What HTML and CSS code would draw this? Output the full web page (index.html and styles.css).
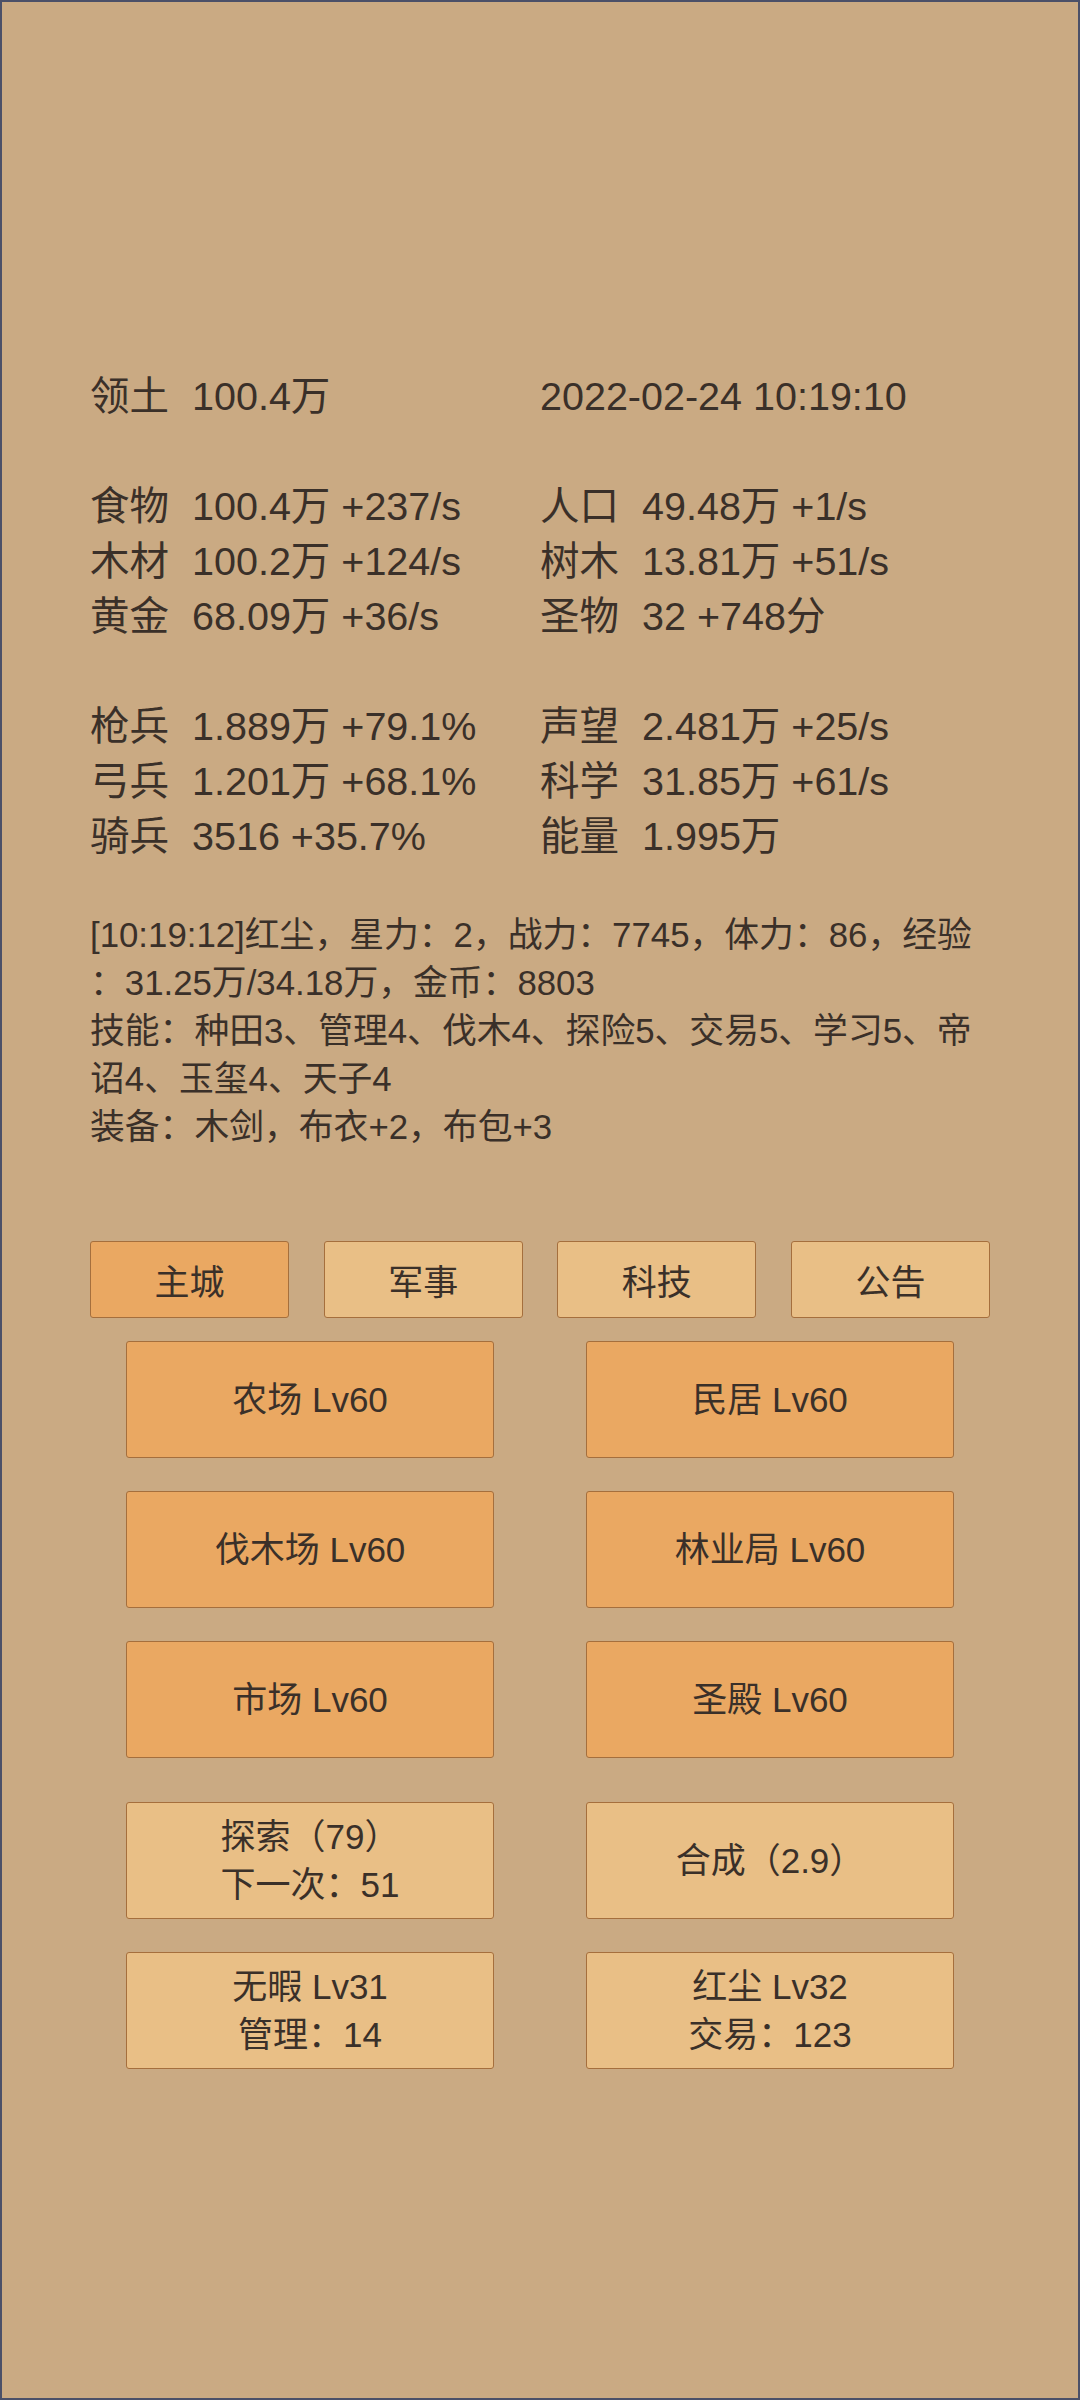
FILE: index.html
```html
<!DOCTYPE html>
<html lang="zh-CN">
<head>
<meta charset="utf-8">
<title>主城</title>
<link rel="stylesheet" href="styles.css">
</head>
<body>
<div class="screen">
  <div class="stats">
    <div class="stat"><span class="k">领土</span><span class="v">100.4万</span></div>
    <div class="stat"><span class="v">2022-02-24 10:19:10</span></div>
    <div class="blank"></div>
    <div class="stat"><span class="k">食物</span><span class="v">100.4万 +237/s</span></div>
    <div class="stat"><span class="k">人口</span><span class="v">49.48万 +1/s</span></div>
    <div class="stat"><span class="k">木材</span><span class="v">100.2万 +124/s</span></div>
    <div class="stat"><span class="k">树木</span><span class="v">13.81万 +51/s</span></div>
    <div class="stat"><span class="k">黄金</span><span class="v">68.09万 +36/s</span></div>
    <div class="stat"><span class="k">圣物</span><span class="v">32 +748分</span></div>
    <div class="blank"></div>
    <div class="stat"><span class="k">枪兵</span><span class="v">1.889万 +79.1%</span></div>
    <div class="stat"><span class="k">声望</span><span class="v">2.481万 +25/s</span></div>
    <div class="stat"><span class="k">弓兵</span><span class="v">1.201万 +68.1%</span></div>
    <div class="stat"><span class="k">科学</span><span class="v">31.85万 +61/s</span></div>
    <div class="stat"><span class="k">骑兵</span><span class="v">3516 +35.7%</span></div>
    <div class="stat"><span class="k">能量</span><span class="v">1.995万</span></div>
  </div>

  <p class="log">[10:19:12]红尘，星力：2，战力：7745，体力：86，经验<br>：31.25万/34.18万，金币：8803<br>技能：种田3、管理4、伐木4、探险5、交易5、学习5、帝<br>诏4、玉玺4、天子4<br>装备：木剑，布衣+2，布包+3</p>

  <div class="tabs">
    <div class="tab active">主城</div>
    <div class="tab">军事</div>
    <div class="tab">科技</div>
    <div class="tab">公告</div>
  </div>

  <div class="grid">
    <div class="btn build">农场 Lv60</div>
    <div class="btn build">民居 Lv60</div>
    <div class="btn build">伐木场 Lv60</div>
    <div class="btn build">林业局 Lv60</div>
    <div class="btn build">市场 Lv60</div>
    <div class="btn build">圣殿 Lv60</div>
  </div>

  <div class="grid actions">
    <div class="btn light">探索（79）<br>下一次：51</div>
    <div class="btn light">合成（2.9）</div>
    <div class="btn light">无暇 Lv31<br>管理：14</div>
    <div class="btn light">红尘 Lv32<br>交易：123</div>
  </div>
</div>
</body>
</html>
```

FILE: styles.css
```css
html, body {
  margin: 0;
  padding: 0;
}

body {
  font-family: "Liberation Sans", "Noto Sans CJK SC", sans-serif;
  color: #3a3029;
}

.screen {
  width: 1080px;
  height: 2400px;
  box-sizing: border-box;
  border: 2px solid #4b5068;
  background: #caaa83;
  padding: 367px 88px 0 88px;
}

.stats {
  display: grid;
  grid-template-columns: 450px 450px;
  font-size: 39.5px;
  line-height: 55px;
}

.blank {
  grid-column: 1 / span 2;
  height: 55px;
}

.stat {
  white-space: nowrap;
}

.k {
  margin-right: 23px;
}

.log {
  margin: 47px 0 0 0;
  width: 900px;
  font-size: 34.8px;
  line-height: 48px;
}

.tabs {
  margin-top: 90px;
  display: flex;
  justify-content: space-between;
}

.tab {
  width: 199px;
  height: 77px;
  box-sizing: border-box;
  border: 1.5px solid #a56f3d;
  border-radius: 3px;
  background: #e9bf86;
  font-size: 35px;
  display: flex;
  align-items: center;
  justify-content: center;
}

.tab.active {
  background: #eaa862;
}

.grid {
  margin-top: 23px;
  padding-left: 36px;
  display: grid;
  grid-template-columns: 368px 368px;
  column-gap: 92px;
  row-gap: 33px;
}

.grid.actions {
  margin-top: 44px;
}

.btn {
  height: 117px;
  box-sizing: border-box;
  border: 1.5px solid #a56f3d;
  border-radius: 3px;
  font-size: 35px;
  line-height: 48px;
  display: flex;
  align-items: center;
  justify-content: center;
  text-align: center;
}

.btn.build {
  background: #eaa862;
}

.btn.light {
  background: #e9bf86;
}
```
